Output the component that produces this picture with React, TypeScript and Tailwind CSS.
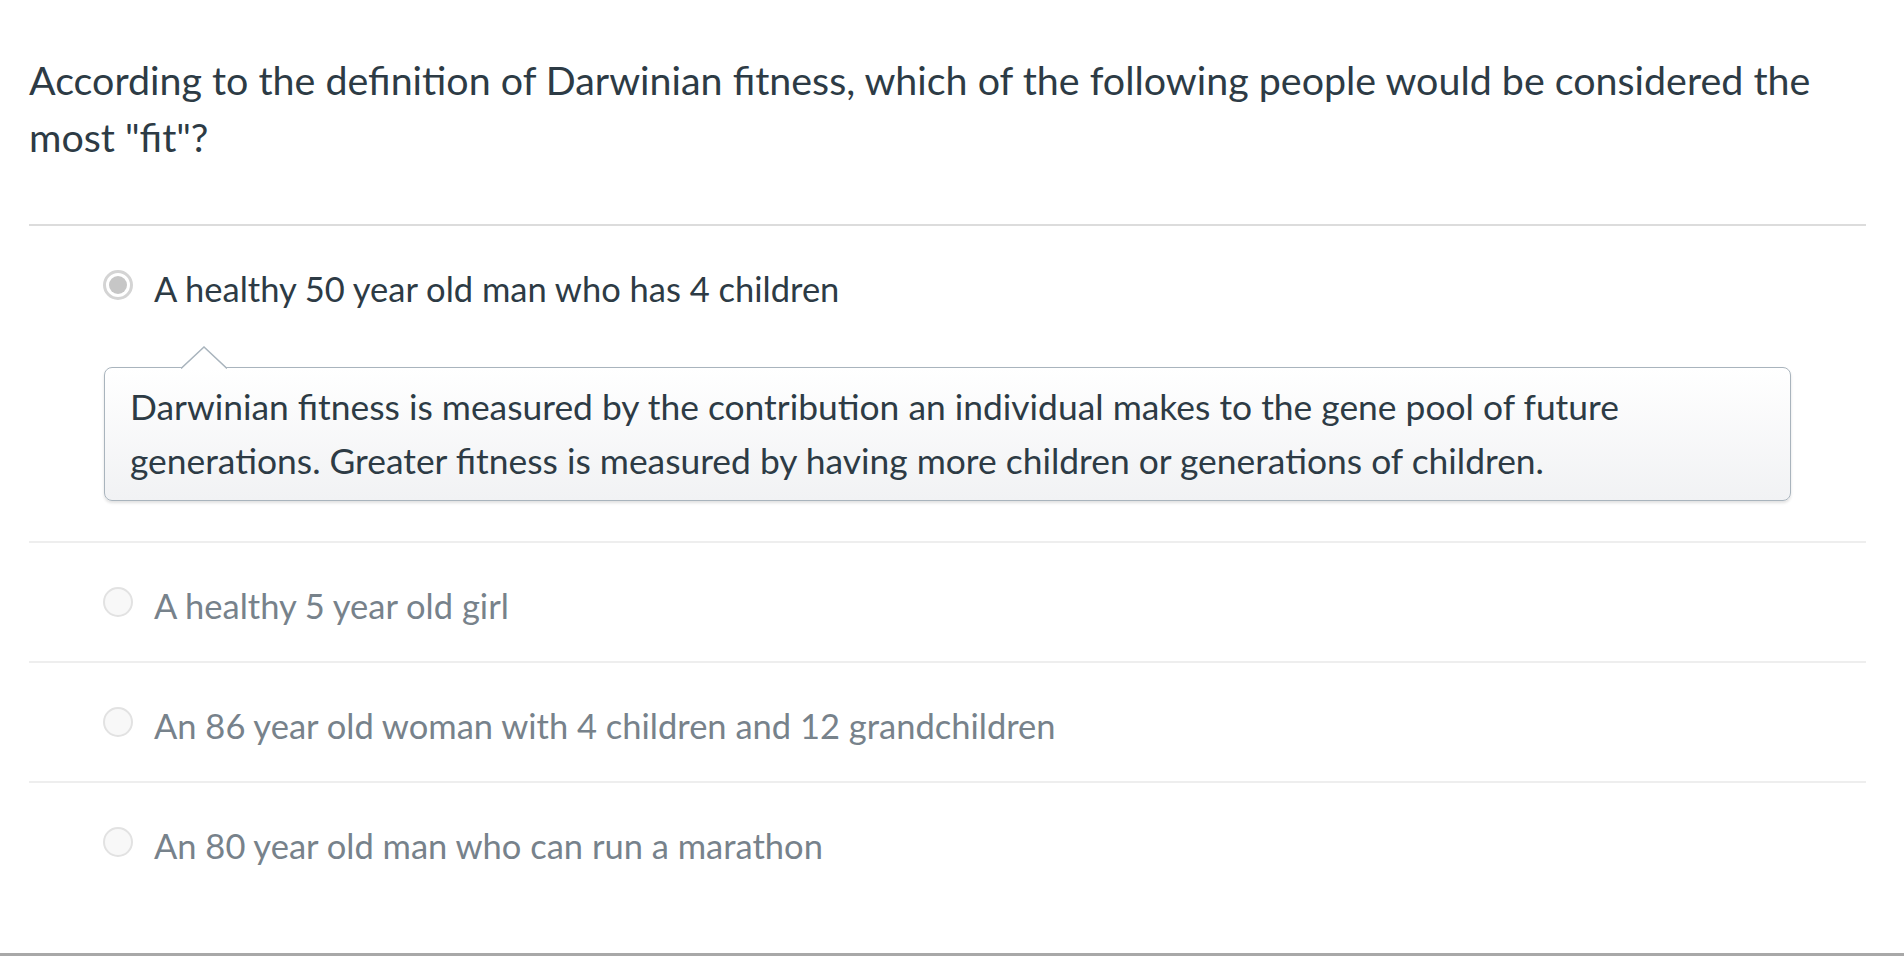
import React from 'react';

// Antwortoptionen der Quizfrage
const answers = [
    { id: 1, text: 'A healthy 50 year old man who has 4 children', selected: true },
    { id: 2, text: 'A healthy 5 year old girl', selected: false },
    { id: 3, text: 'An 86 year old woman with 4 children and 12 grandchildren', selected: false },
    { id: 4, text: 'An 80 year old man who can run a marathon', selected: false },
];

const Radio: React.FC<{ checked: boolean }> = ({ checked }) =>
    checked ? (
        <span className="w-[30px] h-[30px] rounded-full border-[3px] border-[#d4d4d4] bg-white flex items-center justify-center shrink-0">
            <span className="w-[18px] h-[18px] rounded-full bg-[#c6c6c6]" />
        </span>
    ) : (
        <span className="w-[30px] h-[30px] rounded-full border-2 border-[#e2e2e2] bg-[#f8f8f8] shrink-0" />
    );

const Comment: React.FC<{ children: React.ReactNode }> = ({ children }) => (
    <div className="relative mx-[75px] mt-[23px] rounded-[8px] border border-[#a9b4bd] bg-gradient-to-b from-white to-[#f1f2f4] shadow-[0_2px_3px_rgba(0,0,0,0.12)] pl-[25px] pr-[25px] py-[12px] text-[35.4px] leading-[54px] text-[#2d3b45]">
        <svg className="absolute left-[76px] top-[-22px]" width="46" height="23" viewBox="0 0 46 23">
            <polygon points="0,23 23,1 46,23" fill="#ffffff" />
            <polyline points="0,22.5 23,1 46,22.5" fill="none" stroke="#a9b4bd" strokeWidth="1.5" />
        </svg>
        {children}
    </div>
);

export default function App() {
    return (
        <div className="min-h-screen bg-white font-['Lato','Noto_Sans',sans-serif] text-[#2d3b45]">
            <div className="pl-[29px] pr-[38px]">
                <p className="pt-[51px] text-[39.4px] leading-[57px]">
                    According to the definition of Darwinian fitness, which of the following people would be considered the most "fit"?
                </p>
                <div className="mt-[59px] border-t-2 border-[#dcdcdc]">
                    {answers.map((a, i) => (
                        <div
                            key={a.id}
                            className={i < answers.length - 1 ? 'border-b-2 border-[#eeeeee]' : ''}
                        >
                            <div className="h-[118px] flex items-center pl-[74px]">
                                <Radio checked={a.selected} />
                                <span
                                    className={`ml-[21px] mt-[7px] text-[34.5px] leading-[54px] ${a.selected ? 'text-[#2d3b45]' : 'text-[#77828b]'}`}
                                >
                                    {a.text}
                                </span>
                            </div>
                            {a.selected && (
                                <div className="pb-[40px]">
                                    <Comment>
                                        Darwinian fitness is measured by the contribution an individual makes to the gene pool of future generations. Greater fitness is measured by having more children or generations of children.
                                    </Comment>
                                </div>
                            )}
                        </div>
                    ))}
                </div>
            </div>
            <div className="mt-[52px] border-t-[3px] border-[#a8a8a8]" />
        </div>
    );
}
